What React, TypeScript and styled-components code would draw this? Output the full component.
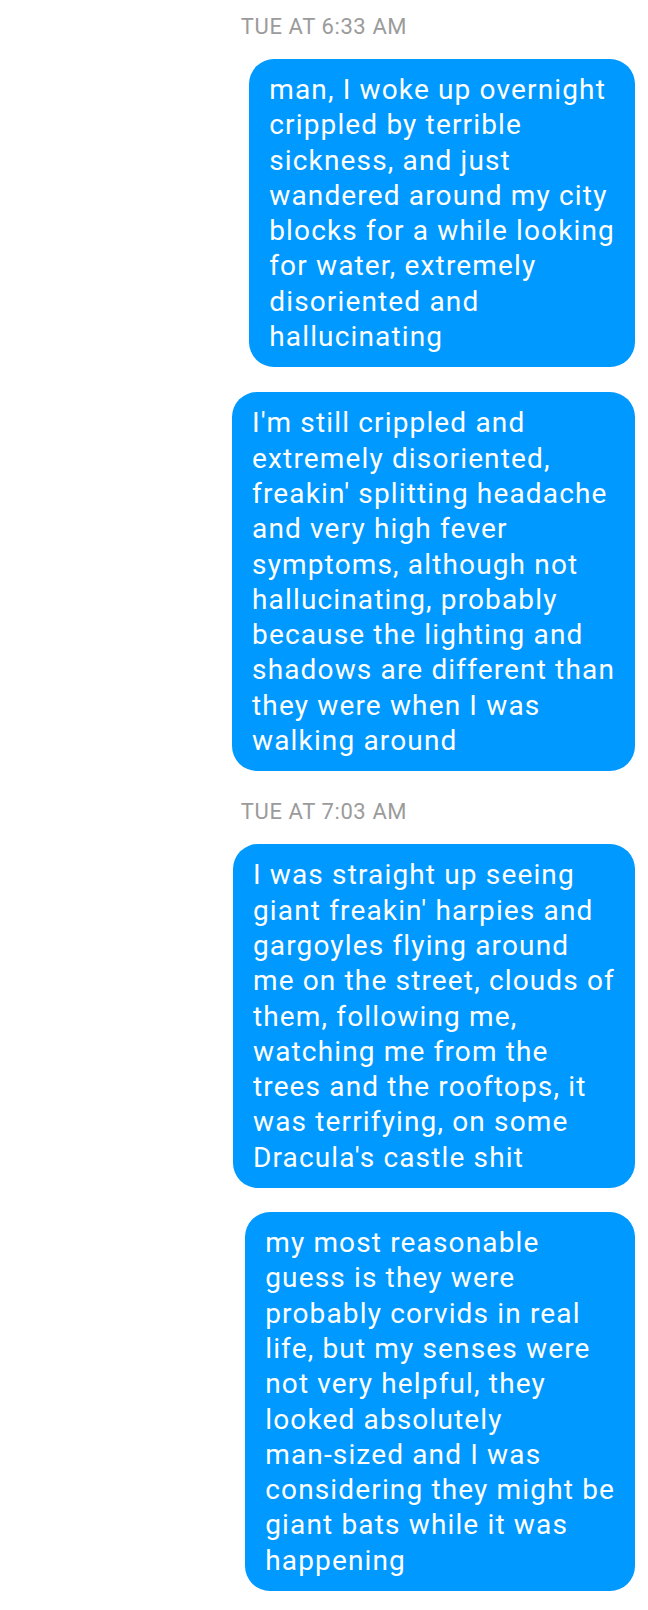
import React from "react";
import styled, { createGlobalStyle } from "styled-components";

const GlobalStyle = createGlobalStyle`
  html, body {
    margin: 0;
    padding: 0;
    background: #ffffff;
  }
  body {
    font-family: Roboto, "Noto Sans", "Liberation Sans", sans-serif;
    -webkit-font-smoothing: antialiased;
  }
`;

const Thread = styled.div`
  display: flex;
  flex-direction: column;
  align-items: flex-end;
  padding: 14px 13px 18px 0;
  width: 648px;
  box-sizing: border-box;
`;

const Timestamp = styled.div<{ $top: number }>`
  align-self: stretch;
  margin: ${(p) => p.$top}px 0 19px 13px;
  text-align: center;
  font-size: 22px;
  line-height: 26px;
  letter-spacing: 0.6px;
  color: #9b9b9b;
  text-transform: uppercase;
`;

const Bubble = styled.div<{ $gap: number }>`
  margin-top: ${(p) => p.$gap}px;
  background: #0099ff;
  color: #ffffff;
  border-radius: 25px;
  padding: 13px 20px 13px 20px;
  font-size: 28px;
  line-height: 35.3px;
  letter-spacing: 1.15px;
  white-space: nowrap;
  box-sizing: border-box;
`;

const Line = styled.span`
  display: block;
`;

type Item =
  | { kind: "time"; text: string; top: number }
  | { kind: "msg"; lines: string[]; gap: number };

const items: Item[] = [
  { kind: "time", text: "TUE AT 6:33 AM", top: 0 },
  {
    kind: "msg",
    gap: 0,
    lines: [
      "man, I woke up overnight",
      "crippled by terrible",
      "sickness, and just",
      "wandered around my city",
      "blocks for a while looking",
      "for water, extremely",
      "disoriented and",
      "hallucinating",
    ],
  },
  {
    kind: "msg",
    gap: 25,
    lines: [
      "I'm still crippled and",
      "extremely disoriented,",
      "freakin' splitting headache",
      "and very high fever",
      "symptoms, although not",
      "hallucinating, probably",
      "because the lighting and",
      "shadows are different than",
      "they were when I was",
      "walking around",
    ],
  },
  { kind: "time", text: "TUE AT 7:03 AM", top: 28 },
  {
    kind: "msg",
    gap: 0,
    lines: [
      "I was straight up seeing",
      "giant freakin' harpies and",
      "gargoyles flying around",
      "me on the street, clouds of",
      "them, following me,",
      "watching me from the",
      "trees and the rooftops, it",
      "was terrifying, on some",
      "Dracula's castle shit",
    ],
  },
  {
    kind: "msg",
    gap: 24,
    lines: [
      "my most reasonable",
      "guess is they were",
      "probably corvids in real",
      "life, but my senses were",
      "not very helpful, they",
      "looked absolutely",
      "man-sized and I was",
      "considering they might be",
      "giant bats while it was",
      "happening",
    ],
  },
];

export default function App() {
  return (
    <>
      <GlobalStyle />
      <Thread>
        {items.map((item, i) =>
          item.kind === "time" ? (
            <Timestamp key={i} $top={item.top}>
              {item.text}
            </Timestamp>
          ) : (
            <Bubble key={i} $gap={item.gap}>
              {item.lines.map((l, j) => (
                <Line key={j}>{l}</Line>
              ))}
            </Bubble>
          )
        )}
      </Thread>
    </>
  );
}
